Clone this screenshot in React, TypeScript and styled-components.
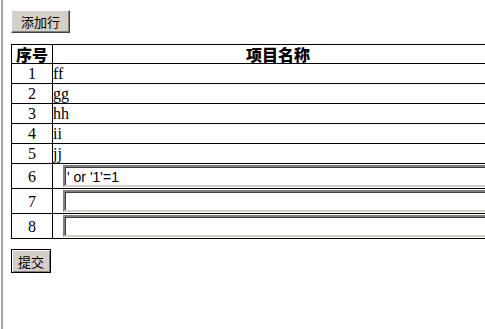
import React from "react";
import styled, { createGlobalStyle } from "styled-components";

const GlobalStyle = createGlobalStyle`
  html, body {
    margin: 0;
    padding: 0;
    background: #ffffff;
  }
  body {
    font-family: "Liberation Serif", "Noto Sans CJK SC", serif;
    font-size: 16px;
    color: #000;
  }
`;

const items = ["ff", "gg", "hh", "ii", "jj"];
const inputs = ["' or '1'=1", "", ""];

export default function App() {
  return (
    <>
      <GlobalStyle />
      <Frame>
        <Button>添加行</Button>
        <ItemTable>
          <thead>
            <tr>
              <HeadCell $width={40}>序号</HeadCell>
              <HeadCell>项目名称</HeadCell>
            </tr>
          </thead>
          <tbody>
            {items.map((name, i) => (
              <tr key={name}>
                <NumCell>{i + 1}</NumCell>
                <NameCell>{name}</NameCell>
              </tr>
            ))}
            {inputs.map((value, i) => (
              <tr key={i}>
                <NumCell $tall>{items.length + i + 1}</NumCell>
                <InputCell>
                  <NameInput defaultValue={value} />
                </InputCell>
              </tr>
            ))}
          </tbody>
        </ItemTable>
        <SubmitButton>提交</SubmitButton>
      </Frame>
    </>
  );
}

const Frame = styled.div`
  box-sizing: border-box;
  min-height: 100vh;
  margin-left: 1px;
  border-left: 2px solid #a3a3a3;
  padding: 10px 0 0 8px;
  overflow: hidden;
`;

const Button = styled.button`
  display: block;
  box-sizing: border-box;
  height: 23px;
  padding: 0 9px;
  margin: 0;
  font-family: "Noto Sans CJK SC", sans-serif;
  font-size: 13px;
  line-height: 1;
  color: #000;
  background: #d4d0c8;
  border: 1px solid;
  border-color: #ffffff #404040 #404040 #ffffff;
  box-shadow: inset -1px -1px 0 #808080;
`;

const SubmitButton = styled(Button)`
  height: 24px;
  padding: 0 6px;
  margin-top: 10px;
  border: 1px solid #000;
  box-shadow: inset 1px 1px 0 #ffffff, inset -1px -1px 0 #808080;
`;

const ItemTable = styled.table`
  margin-top: 11px;
  width: 493px;
  border-collapse: collapse;
  border: 1px solid #000;
  table-layout: fixed;
`;

const HeadCell = styled.th<{ $width?: number }>`
  width: ${(p) => (p.$width ? `${p.$width}px` : "auto")};
  height: 18px;
  padding: 0;
  border: 1px solid #000;
  font-family: "Noto Sans CJK SC", sans-serif;
  font-size: 16px;
  font-weight: 900;
  line-height: 18px;
  text-align: center;
`;

const NumCell = styled.td<{ $tall?: boolean }>`
  height: ${(p) => (p.$tall ? "24px" : "19px")};
  padding: 0;
  border: 1px solid #000;
  text-align: center;
  line-height: 19px;
`;

const NameCell = styled.td`
  padding: 0;
  border: 1px solid #000;
  line-height: 19px;
  text-align: left;
`;

const InputCell = styled.td`
  padding: 1px 0;
  border: 1px solid #000;
`;

const NameInput = styled.input`
  display: block;
  box-sizing: border-box;
  width: 430px;
  height: 22px;
  margin: 0 auto;
  padding: 1px 2px 0;
  font-family: "Liberation Sans", sans-serif;
  font-size: 14px;
  color: #000;
  background: #ffffff;
  border: 2px solid;
  border-color: #808080 #d4d0c8 #d4d0c8 #808080;
  box-shadow: inset 1px 1px 0 #404040;
  outline: none;
`;
